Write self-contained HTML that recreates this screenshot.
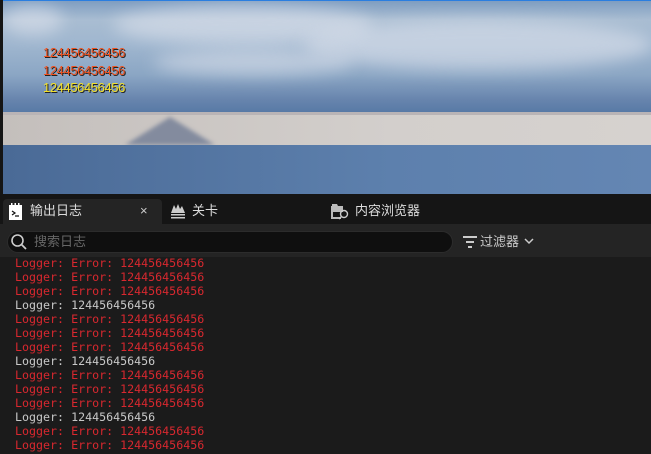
<!DOCTYPE html>
<html><head><meta charset="utf-8"><style>
*{margin:0;padding:0;box-sizing:border-box}
body{width:651px;height:454px;overflow:hidden;background:#151515;position:relative;font-family:"Liberation Sans","Noto Sans CJK SC",sans-serif}
.vp{position:absolute;left:3px;top:0;width:648px;height:194px;overflow:hidden;
background:linear-gradient(180deg,#7d9cc0 0px,#a9bdd2 20px,#9fb6cf 45px,#8ba6c4 75px,#6784ad 100px,#587aa6 112px)}
.cloud{position:absolute;border-radius:50%;background:rgba(225,230,238,.55);filter:blur(8px)}
.band{position:absolute;left:0;top:112px;width:100%;height:33px;background:linear-gradient(90deg,#c4bfbc,#d3cfcc 60%,#d6d2cf)}
.band:before{content:"";position:absolute;left:0;top:0;width:100%;height:3px;background:#b9b4b6}
.mtn{position:absolute;left:122px;top:117px;width:0;height:0;border-left:45px solid transparent;border-right:45px solid transparent;border-bottom:28px solid #838b9e;filter:blur(2px)}
.sea{position:absolute;left:0;top:145px;width:100%;height:49px;background:linear-gradient(90deg,#4a6a96,#5d80ad 60%,#6486b3)}
.top{position:absolute;left:0;top:0;width:100%;height:1px;background:#2a7ee0}
.num{position:absolute;left:43px;font:13px "Liberation Sans",sans-serif;letter-spacing:-0.4px;text-shadow:1px 1px 0 #222}
.tab{position:absolute;top:199px;height:30px;color:#dcdcdc;font-size:13px;line-height:24px}
.search{position:absolute;left:0;top:224px;width:651px;height:33px;background:#242424}
.box{position:absolute;left:7px;top:231px;width:446px;height:22px;border-radius:11px;background:#0f0f0f;border:1px solid #2c2c2c;color:#666;font-size:13px;line-height:20px;padding-left:26px}
.log{position:absolute;left:0;top:257px;width:651px;height:197px;background:#1b1b1b;overflow:hidden}
.log div{position:absolute;left:15px;font:11.65px "DejaVu Sans Mono",monospace;line-height:14px;white-space:pre}
.e{color:#d8282f}.n{color:#c8c8c8}
</style></head><body>
<div class="vp">
<div class="cloud" style="left:110px;top:5px;width:260px;height:40px"></div>
<div class="cloud" style="left:300px;top:20px;width:350px;height:50px"></div>
<div class="cloud" style="left:150px;top:50px;width:200px;height:25px"></div>
<div class="cloud" style="left:0;top:5px;width:60px;height:30px"></div>
<div class="band"></div><div class="mtn"></div><div class="sea"></div>
<div class="top"></div>
</div>
<div class="num" style="top:45px;color:#f0501c">124456456456</div>
<div class="num" style="top:63px;color:#f0501c">124456456456</div>
<div class="num" style="top:80px;color:#f2e02a">124456456456</div>
<div style="position:absolute;left:3px;top:199px;width:159px;height:26px;background:#242424;border-radius:4px 4px 0 0"></div>
<svg style="position:absolute;left:9px;top:203px" width="14" height="17"><rect x="0" y="2" width="13" height="15" fill="#fff"/><rect x="2" y="0" width="1.5" height="3" fill="#fff"/><rect x="5.5" y="0" width="1.5" height="3" fill="#fff"/><rect x="9" y="0" width="1.5" height="3" fill="#fff"/><path d="M3 8l3 2-3 2M6 13h4" stroke="#111" stroke-width="1.2" fill="none"/></svg>
<div class="tab" style="left:30px">输出日志</div>
<div class="tab" style="left:140px;color:#ccc">×</div>
<svg style="position:absolute;left:170px;top:203px" width="16" height="16"><path d="M1 10L4 2 6 6 8 1 10 6 12 3 15 10Z" fill="#ccc"/><rect x="1" y="11" width="14" height="1.5" fill="#ccc"/><rect x="1" y="14" width="14" height="1.5" fill="#ccc"/></svg>
<div class="tab" style="left:192px">关卡</div>
<svg style="position:absolute;left:331px;top:202px" width="20" height="18"><path d="M1 2h5l1 2h5v6H1z" fill="#bbb"/><path d="M1 4v12h9" fill="none" stroke="#bbb" stroke-width="2"/><circle cx="13" cy="12" r="3.5" fill="none" stroke="#ccc" stroke-width="1.4"/><path d="M10.5 14.5L8 17" stroke="#ccc" stroke-width="1.5"/></svg>
<div class="tab" style="left:355px">内容浏览器</div>
<div class="search"></div>
<div class="box">搜索日志</div>
<svg style="position:absolute;left:10px;top:233px" width="18" height="18"><circle cx="7.5" cy="7.5" r="5.5" fill="none" stroke="#ccc" stroke-width="1.6"/><path d="M11.5 11.5l4.5 4.5" stroke="#ccc" stroke-width="1.8"/></svg>
<svg style="position:absolute;left:462px;top:235px" width="16" height="14"><rect x="1" y="1" width="14" height="2" fill="#ccc"/><rect x="4" y="6" width="8" height="2" fill="#ccc"/><rect x="6" y="11" width="4" height="2" fill="#ccc"/></svg>
<div style="position:absolute;left:480px;top:233px;color:#ccc;font-size:13px;line-height:18px">过滤器</div>
<svg style="position:absolute;left:524px;top:237px" width="10" height="8"><path d="M1 2l4 4 4-4" fill="none" stroke="#ccc" stroke-width="1.5"/></svg>
<div class="log">
<div class="e" style="top:-1px">Logger: Error: 124456456456</div>
<div class="e" style="top:13px">Logger: Error: 124456456456</div>
<div class="e" style="top:27px">Logger: Error: 124456456456</div>
<div class="n" style="top:41px">Logger: 124456456456</div>
<div class="e" style="top:55px">Logger: Error: 124456456456</div>
<div class="e" style="top:69px">Logger: Error: 124456456456</div>
<div class="e" style="top:83px">Logger: Error: 124456456456</div>
<div class="n" style="top:97px">Logger: 124456456456</div>
<div class="e" style="top:111px">Logger: Error: 124456456456</div>
<div class="e" style="top:125px">Logger: Error: 124456456456</div>
<div class="e" style="top:139px">Logger: Error: 124456456456</div>
<div class="n" style="top:153px">Logger: 124456456456</div>
<div class="e" style="top:167px">Logger: Error: 124456456456</div>
<div class="e" style="top:181px">Logger: Error: 124456456456</div>
</div>
</body></html>
